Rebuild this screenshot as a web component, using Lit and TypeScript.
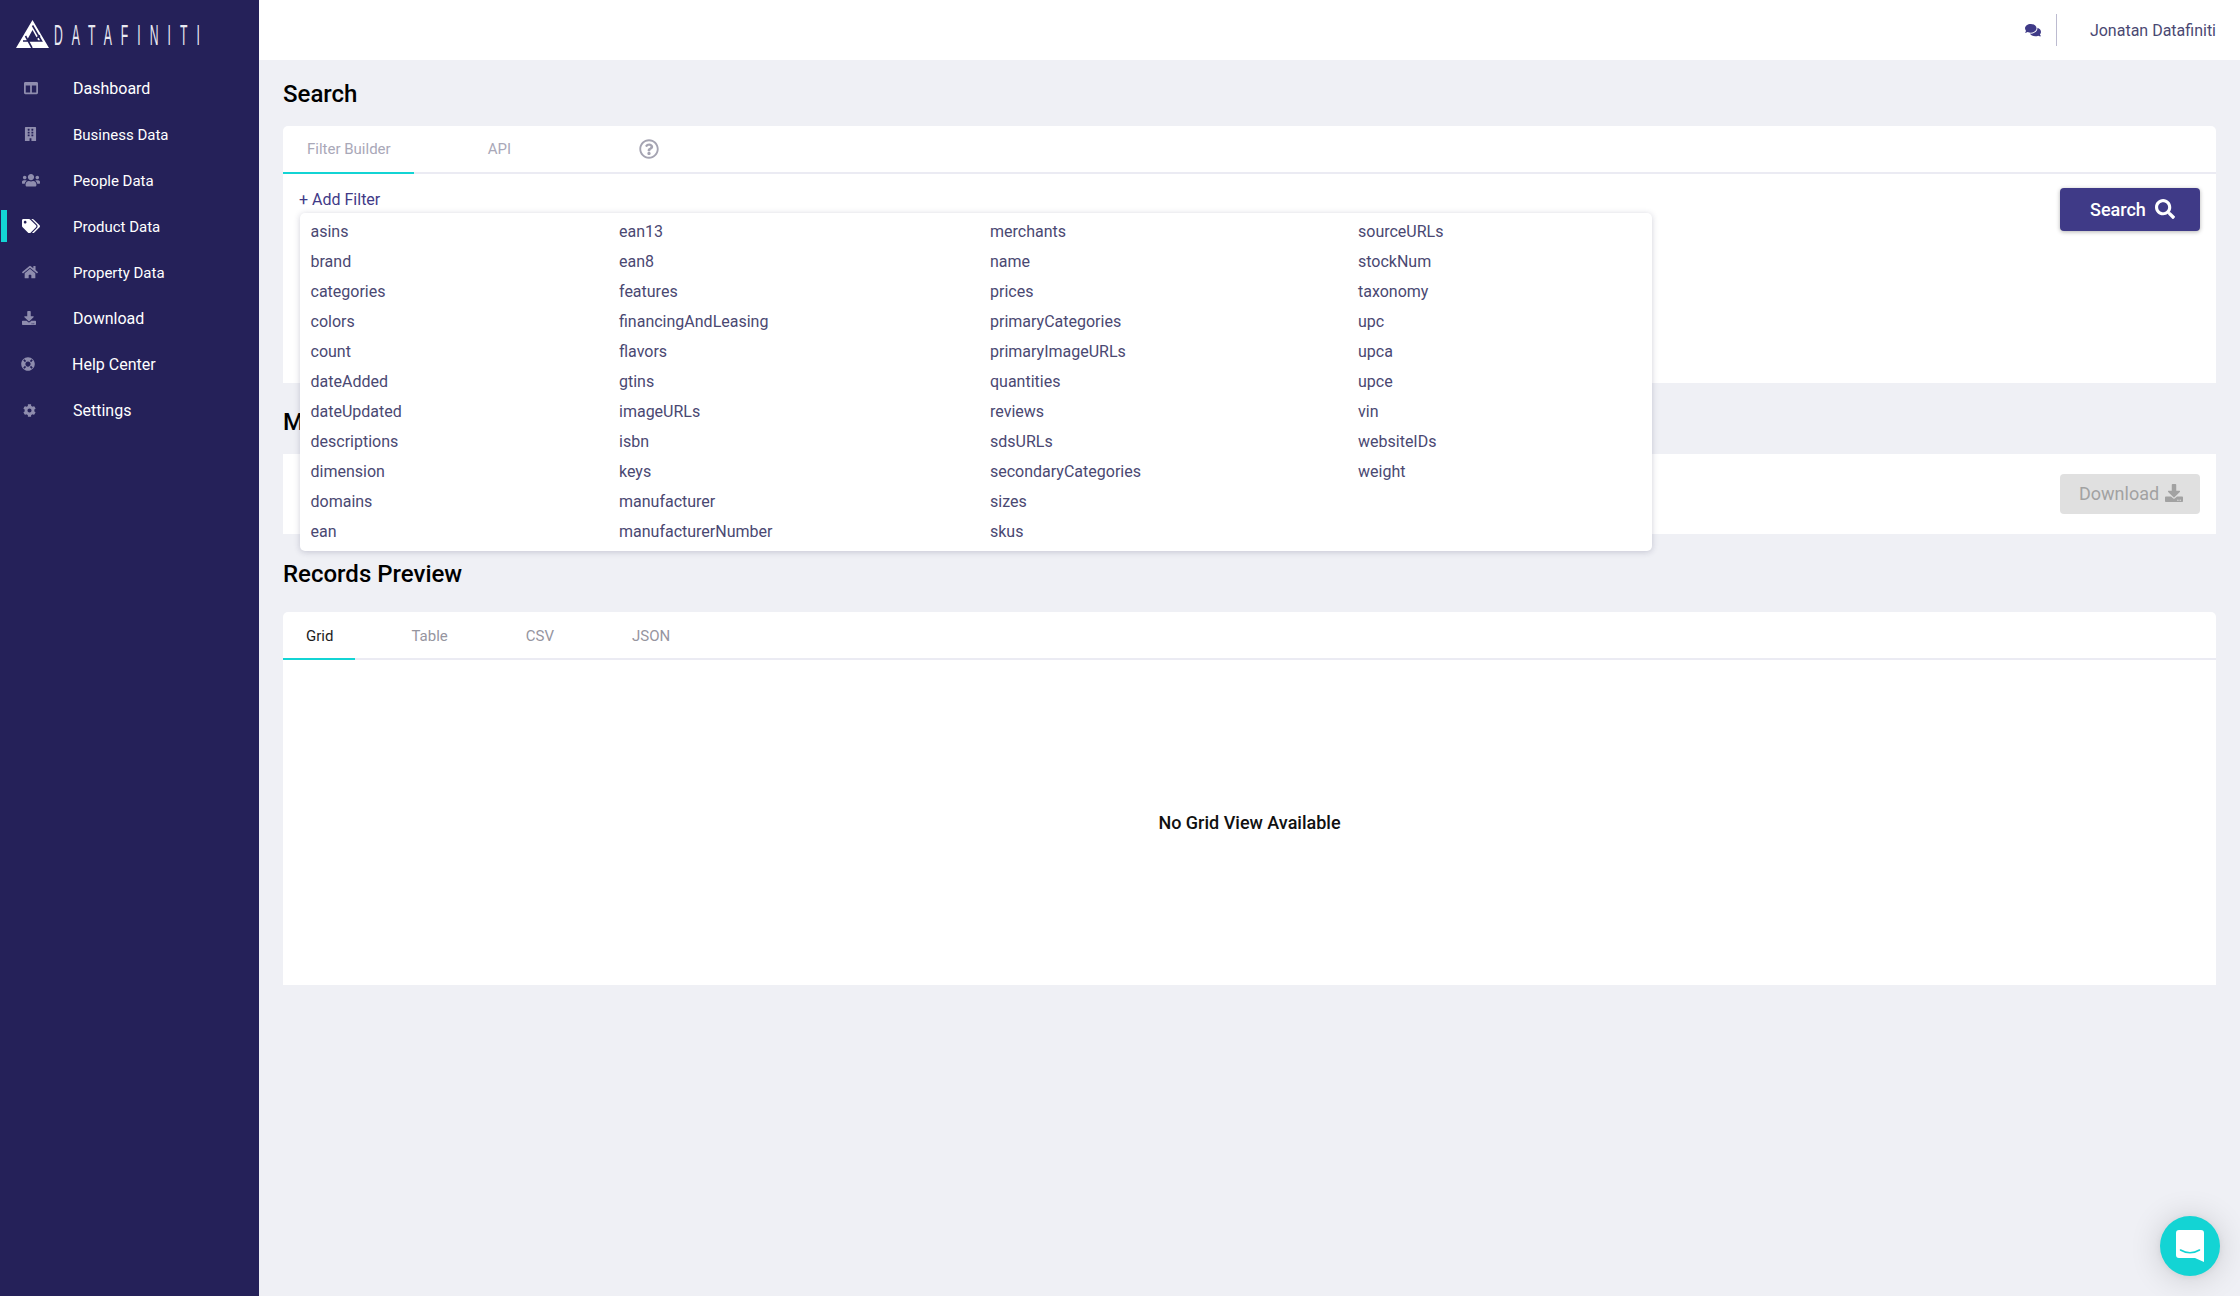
import { LitElement, html, css, svg } from "lit";
import { customElement } from "lit/decorators.js";
import { styleMap } from "lit/directives/style-map.js";

const P: Record<string, [number, string]> = {
  columns: [512, "M464 32H48C21.49 32 0 53.49 0 80v352c0 26.51 21.49 48 48 48h416c26.51 0 48-21.49 48-48V80c0-26.51-21.49-48-48-48zM224 416H64V160h160v256zm224 0H288V160h160v256z"],
  building: [448, "M436 480h-20V24c0-13.255-10.745-24-24-24H56C42.745 0 32 10.745 32 24v456H12c-6.627 0-12 5.373-12 12v20h448v-20c0-6.627-5.373-12-12-12zM128 76c0-6.627 5.373-12 12-12h40c6.627 0 12 5.373 12 12v40c0 6.627-5.373 12-12 12h-40c-6.627 0-12-5.373-12-12V76zm0 96c0-6.627 5.373-12 12-12h40c6.627 0 12 5.373 12 12v40c0 6.627-5.373 12-12 12h-40c-6.627 0-12-5.373-12-12v-40zm52 148h-40c-6.627 0-12-5.373-12-12v-40c0-6.627 5.373-12 12-12h40c6.627 0 12 5.373 12 12v40c0 6.627-5.373 12-12 12zm76 160h-64v-84c0-6.627 5.373-12 12-12h40c6.627 0 12 5.373 12 12v84zm64-172c0 6.627-5.373 12-12 12h-40c-6.627 0-12-5.373-12-12v-40c0-6.627 5.373-12 12-12h40c6.627 0 12 5.373 12 12v40zm0-96c0 6.627-5.373 12-12 12h-40c-6.627 0-12-5.373-12-12v-40c0-6.627 5.373-12 12-12h40c6.627 0 12 5.373 12 12v40zm0-96c0 6.627-5.373 12-12 12h-40c-6.627 0-12-5.373-12-12V76c0-6.627 5.373-12 12-12h40c6.627 0 12 5.373 12 12v40z"],
  users: [640, "M96 224c35.3 0 64-28.7 64-64s-28.7-64-64-64-64 28.7-64 64 28.7 64 64 64zm448 0c35.3 0 64-28.7 64-64s-28.7-64-64-64-64 28.7-64 64 28.7 64 64 64zm32 32h-64c-17.6 0-33.5 7.1-45.1 18.6 40.3 22.1 68.9 62 75.1 109.4h66c17.7 0 32-14.3 32-32v-32c0-35.3-28.7-64-64-64zm-256 0c61.9 0 112-50.1 112-112S381.9 32 320 32 208 82.1 208 144s50.1 112 112 112zm76.8 32h-8.3c-20.8 10-43.9 16-68.5 16s-47.6-6-68.5-16h-8.3C179.6 288 128 339.6 128 403.2V432c0 26.5 21.5 48 48 48h288c26.5 0 48-21.5 48-48v-28.8c0-63.6-51.6-115.2-115.2-115.2zm-223.7-13.4C161.5 263.1 145.6 256 128 256H64c-35.3 0-64 28.7-64 64v32c0 17.7 14.3 32 32 32h65.9c6.3-47.4 34.9-87.3 75.2-109.4z"],
  tags: [640, "M497.941 225.941L286.059 14.059A48 48 0 0 0 252.118 0H48C21.49 0 0 21.49 0 48v204.118a48 48 0 0 0 14.059 33.941l211.882 211.882c18.744 18.745 49.136 18.746 67.882 0l204.118-204.118c18.745-18.745 18.745-49.137 0-67.882zM112 160c-26.51 0-48-21.49-48-48s21.49-48 48-48 48 21.49 48 48-21.49 48-48 48zm513.941 133.823L421.823 497.941c-18.745 18.745-49.137 18.745-67.882 0l-.36-.36L527.64 323.522c16.999-16.999 26.36-39.6 26.36-63.64s-9.362-46.641-26.36-63.64L331.397 0h48.721a48 48 0 0 1 33.941 14.059l211.882 211.882c18.745 18.745 18.745 49.137 0 67.882z"],
  home: [576, "M280.37 148.26L96 300.11V464a16 16 0 0 0 16 16l112.06-.29a16 16 0 0 0 15.92-16V368a16 16 0 0 1 16-16h64a16 16 0 0 1 16 16v95.64a16 16 0 0 0 16 16.05L464 480a16 16 0 0 0 16-16V300L295.67 148.26a12.19 12.19 0 0 0-15.3 0zM571.6 251.47L488 182.56V44.05a12 12 0 0 0-12-12h-56a12 12 0 0 0-12 12v72.61L318.47 43a48 48 0 0 0-61 0L4.34 251.47a12 12 0 0 0-1.6 16.9l25.5 31A12 12 0 0 0 45.15 301l235.22-193.74a12.19 12.19 0 0 1 15.3 0L530.9 301a12 12 0 0 0 16.9-1.6l25.5-31a12 12 0 0 0-1.7-16.93z"],
  download: [512, "M216 0h80c13.3 0 24 10.7 24 24v168h87.7c17.8 0 26.7 21.5 14.1 34.1L269.7 378.3c-7.5 7.5-19.8 7.5-27.3 0L90.1 226.1c-12.6-12.6-3.7-34.1 14.1-34.1H192V24c0-13.3 10.7-24 24-24zm296 376v112c0 13.3-10.7 24-24 24H24c-13.3 0-24-10.7-24-24V376c0-13.3 10.7-24 24-24h146.7l49 49c20.1 20.1 52.5 20.1 72.6 0l49-49H488c13.3 0 24 10.7 24 24zm-124 88c0-11-9-20-20-20s-20 9-20 20 9 20 20 20 20-9 20-20zm64 0c0-11-9-20-20-20s-20 9-20 20 9 20 20 20 20-9 20-20z"],
  ring: [512, "M256 8C119.033 8 8 119.033 8 256s111.033 248 248 248 248-111.033 248-248S392.967 8 256 8zm173.696 119.559l-63.399 63.399c-10.987-18.559-26.67-34.252-45.255-45.255l63.399-63.399a218.396 218.396 0 0 1 45.255 45.255zM256 352c-53.019 0-96-42.981-96-96s42.981-96 96-96 96 42.981 96 96-42.981 96-96 96zM127.559 82.304l63.399 63.399c-18.559 10.987-34.252 26.67-45.255 45.255l-63.399-63.399a218.372 218.372 0 0 1 45.255-45.255zM82.304 384.441l63.399-63.399c10.987 18.559 26.67 34.252 45.255 45.255l-63.399 63.399a218.396 218.396 0 0 1-45.255-45.255zm302.137 45.255l-63.399-63.399c18.559-10.987 34.252-26.67 45.255-45.255l63.399 63.399a218.403 218.403 0 0 1-45.255 45.255z"],
  cog: [512, "M487.4 315.7l-42.6-24.6c4.3-23.2 4.3-47 0-70.2l42.6-24.6c4.9-2.8 7.1-8.6 5.5-14-11.1-35.6-30-67.8-54.7-94.6-3.8-4.1-10-5.1-14.8-2.3L380.8 110c-17.9-15.4-38.5-27.3-60.8-35.1V25.8c0-5.6-3.9-10.5-9.4-11.7-36.7-8.2-74.3-7.8-109.2 0-5.5 1.2-9.4 6.1-9.4 11.7V75c-22.2 7.9-42.8 19.8-60.8 35.1L88.7 85.5c-4.9-2.8-11-1.9-14.8 2.3-24.7 26.7-43.6 58.9-54.7 94.6-1.7 5.4.6 11.2 5.5 14L67.3 221c-4.3 23.2-4.3 47 0 70.2l-42.6 24.6c-4.9 2.8-7.1 8.6-5.5 14 11.1 35.6 30 67.8 54.7 94.6 3.8 4.1 10 5.1 14.8 2.3l42.6-24.6c17.9 15.4 38.5 27.3 60.8 35.1v49.2c0 5.6 3.9 10.5 9.4 11.7 36.7 8.2 74.3 7.8 109.2 0 5.5-1.2 9.4-6.1 9.4-11.7v-49.2c22.2-7.9 42.8-19.8 60.8-35.1l42.6 24.6c4.9 2.8 11 1.9 14.8-2.3 24.7-26.7 43.6-58.9 54.7-94.6 1.5-5.5-.7-11.3-5.6-14.1zM256 336c-44.1 0-80-35.9-80-80s35.9-80 80-80 80 35.9 80 80-35.9 80-80 80z"],
  comments: [576, "M416 192c0-88.4-93.1-160-208-160S0 103.6 0 192c0 34.3 14.1 65.9 38 92-13.4 30.2-35.5 54.2-35.8 54.5-2.2 2.3-2.8 5.7-1.5 8.7S4.8 352 8 352c36.6 0 66.9-12.3 88.7-25 32.2 15.7 70.3 25 111.3 25 114.9 0 208-71.6 208-160zm122 220c23.9-26 38-57.7 38-92 0-66.9-53.5-124.2-129.3-148.1.9 6.6 1.3 13.3 1.3 20.1 0 105.9-107.7 192-240 192-10.8 0-21.3-.8-31.7-1.9C207.8 439.6 281.8 480 368 480c41 0 79.1-9.2 111.3-25 21.8 12.7 52.1 25 88.7 25 3.2 0 6.1-1.9 7.3-4.8 1.3-2.9.7-6.3-1.5-8.7-.3-.3-22.4-24.2-35.8-54.5z"],
  search: [512, "M505 442.7L405.3 343c-4.5-4.5-10.6-7-17-7H372c27.6-35.3 44-79.7 44-128C416 93.1 322.9 0 208 0S0 93.1 0 208s93.1 208 208 208c48.3 0 92.7-16.4 128-44v16.3c0 6.4 2.5 12.5 7 17l99.7 99.7c9.4 9.4 24.6 9.4 33.9 0l28.3-28.3c9.4-9.4 9.4-24.6.1-34zM208 336c-70.7 0-128-57.2-128-128 0-70.7 57.2-128 128-128 70.7 0 128 57.2 128 128 0 70.7-57.2 128-128 128z"],
  question: [512, "M256 8C119.043 8 8 119.083 8 256c0 136.997 111.043 248 248 248s248-111.003 248-248C504 119.083 392.957 8 256 8zm0 448c-110.532 0-200-89.431-200-200 0-110.495 89.472-200 200-200 110.491 0 200 89.471 200 200 0 110.53-89.431 200-200 200zm107.244-255.2c0 67.052-72.421 68.084-72.421 92.863V300c0 6.627-5.373 12-12 12h-45.647c-6.627 0-12-5.373-12-12v-8.659c0-35.745 27.1-50.034 47.579-61.516 17.561-9.845 28.324-16.541 28.324-29.579 0-17.246-21.999-28.693-39.784-28.693-23.189 0-33.894 10.977-48.942 29.969-4.057 5.12-11.46 6.071-16.666 2.124l-27.824-21.098c-5.107-3.872-6.251-11.066-2.644-16.363C184.846 131.491 214.94 112 261.794 112c49.071 0 101.45 38.304 101.45 88.8zM298 368c0 23.159-18.841 42-42 42s-42-18.841-42-42 18.841-42 42-42 42 18.841 42 42z"],
};

const icon = (name: string, w: number) => {
  const [vw, d] = P[name];
  return html`<svg class="ic" viewBox="0 0 ${vw} 512" width=${w} height=${(w * 512) / vw} fill="currentColor">${svg`<path d=${d}></path>`}</svg>`;
};

// icon, label, icon width, icon x in the row, row class, active
const NAV = [
  ["columns", "Dashboard", 14, 24, "", 0],
  ["building", "Business Data", 13, 24, "sm", 0],
  ["users", "People Data", 18, 22, "sm", 0],
  ["tags", "Product Data", 18, 22, "sm", 1],
  ["home", "Property Data", 16, 22, "sm", 0],
  ["download", "Download", 14, 22, "", 0],
  ["ring", "Help Center", 14, 21, "hc", 0],
  ["cog", "Settings", 13, 23, "", 0],
] as const;

const COLS = [
  ["asins", "brand", "categories", "colors", "count", "dateAdded", "dateUpdated", "descriptions", "dimension", "domains", "ean"],
  ["ean13", "ean8", "features", "financingAndLeasing", "flavors", "gtins", "imageURLs", "isbn", "keys", "manufacturer", "manufacturerNumber"],
  ["merchants", "name", "prices", "primaryCategories", "primaryImageURLs", "quantities", "reviews", "sdsURLs", "secondaryCategories", "sizes", "skus"],
  ["sourceURLs", "stockNum", "taxonomy", "upc", "upca", "upce", "vin", "websiteIDs", "weight"],
];

@customElement("app-root")
export class AppRoot extends LitElement {
  static styles = css`
    :host { display: flex; height: 1296px; font-family: Roboto, "Liberation Sans", sans-serif; background: #eff0f5; overflow: hidden; position: relative; }
    .ic { display: block; flex: none; }
    .side { width: 259px; flex: none; background: #252159; color: #fff; }
    .logo { height: 65px; display: flex; align-items: flex-start; padding: 20px 0 0 16px; box-sizing: border-box; overflow: hidden; }
    .logo svg { flex: none; }
    .logo-text { font: 300 29px/28px "Liberation Sans", sans-serif; letter-spacing: 21.5px; transform: scaleX(.42); transform-origin: left center; margin: 1px 0 0 5px; white-space: nowrap; color: #e9e9f2; }
    .nav-item { height: 46px; display: flex; align-items: center; position: relative; font-size: 16px; }
    .nav-item.sm { font-size: 15px; }
    .nav-item.sm .lbl { padding-top: 1px; }
    .nav-item.hc .lbl { margin-left: -1px; }
    .nav-ic { width: 73px; box-sizing: border-box; display: flex; flex: none; }
    .nav-ic .ic { color: #8f8dae; }
    .nav-item.on .ic { color: #fff; }
    .nav-item.on::before { content: ""; position: absolute; left: 1px; top: 7px; width: 6px; height: 32px; background: #13d4d4; }
    .main { flex: 1; min-width: 0; }
    .top { height: 60px; background: #fff; display: flex; align-items: center; justify-content: flex-end; padding-right: 24px; font-size: 16px; color: #4a4872; }
    .top .chat { color: #3f3a87; }
    .top .name { padding-top: 1px; }
    .top .div { width: 1px; height: 32px; background: #bcbbd0; margin: 0 33px 0 15px; }
    .content { padding: 0 24px 0 24px; }
    h2 { margin: 0; font-size: 24px; font-weight: 500; color: #000; line-height: 28px; }
    .h1 { padding-top: 20px; height: 66px; box-sizing: border-box; }
    .h2 { padding-top: 25px; height: 71px; box-sizing: border-box; }
    .h3 { padding-top: 26px; height: 78px; box-sizing: border-box; }
    .card { background: #fff; border-radius: 5px 5px 0 0; position: relative; }
    .tabs { display: flex; height: 48px; box-sizing: border-box; border-bottom: 2px solid #ebebf3; align-items: stretch; font-size: 15px; color: #a9a8b8; }
    .tab { padding: 0 24px; display: flex; align-items: center; position: relative; }
    .tab.on::after { content: ""; position: absolute; left: 0; right: 0; bottom: -2px; height: 2px; background: #13d4d4; }
    .tabs.a .tab.on { padding-right: 23px; }
    .tabs.a .tab + .tab { margin-left: 50px; }
    .help { margin-left: 104px; align-self: center; color: #a5a4b2; }
    .tabs.b { color: #96959f; font-size: 15px; }
    .tabs.b .tab { padding: 2px 23px 0; }
    .tabs.b .tab.on { color: #1c1c1c; padding-right: 22px; }
    .tabs.b .tab + .tab { margin-left: 32px; }
    .tabs.b .tab.on + .tab { margin-left: 33px; }
    .body1 { height: 209px; display: flex; justify-content: space-between; align-items: flex-start; padding: 14px 16px 0 16px; box-sizing: border-box; }
    .add { font-size: 16px; color: #3f3a87; line-height: 20px; margin-top: 2px; }
    .btn { width: 140px; height: 43px; border-radius: 4px; border: 0; display: flex; align-items: center; justify-content: flex-start; font: 500 18px Roboto, sans-serif; }
    .btn.primary { background: #3f3a87; color: #fff; box-shadow: 0 1px 4px rgba(0,0,0,.3); padding: 0 0 1px 30px; gap: 9px; }
    .btn.off { background: #e0e0e0; color: #a2a2a2; height: 40px; font-weight: 400; padding: 0 0 2px 19px; gap: 6px; }
    .drop { position: absolute; left: 17px; top: 87px; height: 338px; background: #fff; border-radius: 5px; box-shadow: 0 1px 6px rgba(40,40,80,.22); padding: 4px 0 0 10.5px; box-sizing: border-box; z-index: 2; display: grid; grid-template-columns: 308.5px 371px 368px 1fr; width: 1352px; }
    .drop div div { height: 30px; line-height: 30px; font-size: 16px; color: #4a4872; }
    .card2 { height: 80px; background: #fff; display: flex; justify-content: flex-end; align-items: center; padding-right: 16px; }
    .card3 { height: 373px; display: flex; flex-direction: column; }
    .empty { flex: 1; display: flex; align-items: center; justify-content: center; font-weight: 500; font-size: 18px; color: #111; }
    .launcher { position: absolute; right: 20px; bottom: 20px; width: 60px; height: 60px; border-radius: 50%; background: #13d4d4; box-shadow: 0 1px 6px rgba(0,0,0,.06), 0 2px 32px rgba(0,0,0,.16); display: flex; align-items: center; justify-content: center; }
  `;

  render() {
    return html`
      <aside class="side">
        <div class="logo">
          <svg width="33" height="28" viewBox="0 0 33 28">
            <path fill="#fff" fill-rule="evenodd" d="M16.5 0L33 28H0zM16.5 10L10.5 21h12z"></path>
            <path fill="none" stroke="#252159" stroke-width="1.6" d="M16.5 5.5L25.5 21H7M9.5 16L16 28M24 15.5L17 21"></path>
          </svg>
          <span class="logo-text">DATAFINITI</span>
        </div>
        ${NAV.map(([i, t, w, x, c, on]) => html`
          <div class="nav-item ${c} ${on ? "on" : ""}">
            <span class="nav-ic" style=${styleMap({ paddingLeft: `${x}px` })}>${icon(i, w)}</span><span class="lbl">${t}</span>
          </div>`)}
      </aside>
      <main class="main">
        <header class="top">
          <span class="chat">${icon("comments", 16)}</span>
          <span class="div"></span>
          <span class="name">Jonatan Datafiniti</span>
        </header>
        <div class="content">
          <div class="h1"><h2>Search</h2></div>
          <section class="card">
            <div class="tabs a">
              <div class="tab on">Filter Builder</div>
              <div class="tab">API</div>
              <span class="help">${icon("question", 20)}</span>
            </div>
            <div class="body1">
              <span class="add">+ Add Filter</span>
              <button class="btn primary">Search ${icon("search", 20)}</button>
            </div>
            <div class="drop">
              ${COLS.map((c) => html`<div>${c.map((x) => html`<div>${x}</div>`)}</div>`)}
            </div>
          </section>
          <div class="h2"><h2>M</h2></div>
          <section class="card2">
            <button class="btn off">Download ${icon("download", 18)}</button>
          </section>
          <div class="h3"><h2>Records Preview</h2></div>
          <section class="card card3">
            <div class="tabs b">
              <div class="tab on">Grid</div>
              <div class="tab">Table</div>
              <div class="tab">CSV</div>
              <div class="tab">JSON</div>
            </div>
            <div class="empty">No Grid View Available</div>
          </section>
        </div>
      </main>
      <div class="launcher">
        <svg width="28" height="32" viewBox="0 0 28 32">
          <path fill="#fff" d="M3 0h22a3 3 0 0 1 3 3v29l-9-4H3a3 3 0 0 1-3-3V3a3 3 0 0 1 3-3z"></path>
          <path fill="none" stroke="#13d4d4" stroke-width="1.6" stroke-linecap="round" d="M4.5 20c6 3.5 13 3.5 19 0"></path>
        </svg>
      </div>
    `;
  }
}
